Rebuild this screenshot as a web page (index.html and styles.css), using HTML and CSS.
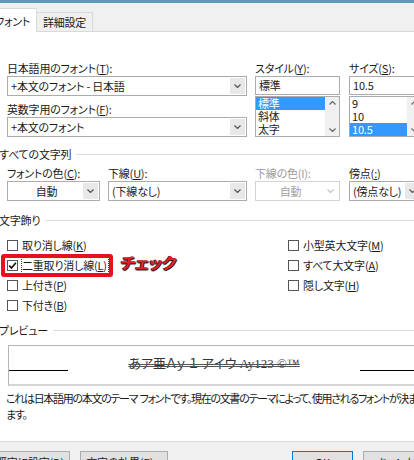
FILE: index.html
```html
<!DOCTYPE html>
<html lang="ja">
<head>
<meta charset="utf-8">
<title>フォント</title>
<link rel="stylesheet" href="styles.css">
</head>
<body>
<div class="dialog">
  <div class="titlebar"></div>
  <div class="tabbar">
    <div class="tab tab-active">フォント</div>
    <div class="tab tab-inactive">詳細設定</div>
  </div>
  <div class="page">
    <div class="font-row">
      <div class="col-main">
        <div class="label">日本語用のフォント(<u>T</u>):</div>
        <div class="combo"><span class="val">+本文のフォント - 日本語</span><span class="arrow"><svg width="7" height="4" viewBox="0 0 7 4"><path d="M0.5 0.5 L3.5 3.5 L6.5 0.5" fill="none" stroke="#555" stroke-width="1.2"/></svg></span></div>
        <div class="label second">英数字用のフォント(<u>F</u>):</div>
        <div class="combo"><span class="val">+本文のフォント</span><span class="arrow"><svg width="7" height="4" viewBox="0 0 7 4"><path d="M0.5 0.5 L3.5 3.5 L6.5 0.5" fill="none" stroke="#555" stroke-width="1.2"/></svg></span></div>
      </div>
      <div class="col-style">
        <div class="label">スタイル(<u>Y</u>):</div>
        <div class="textbox">標準</div>
        <div class="listbox">
          <div class="items">
            <div class="item sel">標準</div>
            <div class="item">斜体</div>
            <div class="item">太字</div>
          </div>
          <div class="scroll">
            <svg width="7" height="4" viewBox="0 0 7 4"><path d="M0.5 3.5 L3.5 0.5 L6.5 3.5" fill="none" stroke="#666" stroke-width="1.2"/></svg>
            <svg width="7" height="4" viewBox="0 0 7 4"><path d="M0.5 0.5 L3.5 3.5 L6.5 0.5" fill="none" stroke="#666" stroke-width="1.2"/></svg>
          </div>
        </div>
      </div>
      <div class="col-size">
        <div class="label">サイズ(<u>S</u>):</div>
        <div class="textbox">10.5</div>
        <div class="listbox">
          <div class="items">
            <div class="item">9</div>
            <div class="item">10</div>
            <div class="item sel">10.5</div>
          </div>
          <div class="scroll">
            <svg width="7" height="4" viewBox="0 0 7 4"><path d="M0.5 3.5 L3.5 0.5 L6.5 3.5" fill="none" stroke="#666" stroke-width="1.2"/></svg>
            <svg width="7" height="4" viewBox="0 0 7 4"><path d="M0.5 0.5 L3.5 3.5 L6.5 0.5" fill="none" stroke="#666" stroke-width="1.2"/></svg>
          </div>
        </div>
      </div>
    </div>

    <div class="group g-all">すべての文字列</div>
    <div class="attr-row">
      <div class="c1">
        <div class="label">フォントの色(<u>C</u>):</div>
        <div class="combo center"><span class="val">自動</span><span class="arrow"><svg width="7" height="4" viewBox="0 0 7 4"><path d="M0.5 0.5 L3.5 3.5 L6.5 0.5" fill="none" stroke="#555" stroke-width="1.2"/></svg></span></div>
      </div>
      <div class="c2">
        <div class="label">下線(<u>U</u>):</div>
        <div class="combo"><span class="val">(下線なし)</span><span class="arrow"><svg width="7" height="4" viewBox="0 0 7 4"><path d="M0.5 0.5 L3.5 3.5 L6.5 0.5" fill="none" stroke="#555" stroke-width="1.2"/></svg></span></div>
      </div>
      <div class="c3">
        <div class="label disabled-label">下線の色(I):</div>
        <div class="combo center disabled"><span class="val">自動</span><span class="arrow"><svg width="7" height="4" viewBox="0 0 7 4"><path d="M0.5 0.5 L3.5 3.5 L6.5 0.5" fill="none" stroke="#c4c4c4" stroke-width="1.2"/></svg></span></div>
      </div>
      <div class="c4">
        <div class="label">傍点(<u>:</u>)</div>
        <div class="combo"><span class="val">(傍点なし)</span><span class="arrow"><svg width="7" height="4" viewBox="0 0 7 4"><path d="M0.5 0.5 L3.5 3.5 L6.5 0.5" fill="none" stroke="#555" stroke-width="1.2"/></svg></span></div>
      </div>
    </div>

    <div class="group g-deco">文字飾り</div>
    <div class="checks">
      <div class="check-col left">
        <div class="check"><span class="box"></span><span>取り消し線(<u>K</u>)</span></div>
        <div class="check"><span class="box"><svg width="9" height="9" viewBox="0 0 9 9"><path d="M1.2 4.6 L3.5 7 L7.9 1.8" fill="none" stroke="#111" stroke-width="1.6"/></svg></span><span class="focus">二重取り消し線(<u>L</u>)</span></div>
        <div class="check"><span class="box"></span><span>上付き(<u>P</u>)</span></div>
        <div class="check"><span class="box"></span><span>下付き(<u>B</u>)</span></div>
      </div>
      <div class="check-col right">
        <div class="check"><span class="box"></span><span>小型英大文字(<u>M</u>)</span></div>
        <div class="check"><span class="box"></span><span>すべて大文字(<u>A</u>)</span></div>
        <div class="check"><span class="box"></span><span>隠し文字(<u>H</u>)</span></div>
      </div>
      <div class="highlight"></div>
      <div class="callout">チェック</div>
    </div>

    <div class="group g-prev">プレビュー</div>
    <div class="preview">
      <span class="base-line bl-left"></span>
      <span class="sample">あア亜Ａｙ １ アイウ Ay123 ©™</span>
      <span class="base-line bl-right"></span>
    </div>
    <div class="desc">これは日本語用の本文のテーマ&nbsp;&nbsp;フォントです。現在の文書のテーマによって、使用されるフォントが決まり<br>ます。</div>
  </div>
  <div class="footer">
    <div class="btn b-default">既定に設定(<u>D</u>)</div>
    <div class="btn b-effect">文字の効果(<u>E</u>)...</div>
    <div class="btn b-ok">OK</div>
    <div class="btn b-cancel">キャンセル</div>
  </div>
</div>
</body>
</html>
```

FILE: styles.css
```css
* { box-sizing: border-box; }
html, body { margin: 0; padding: 0; }
body {
  width: 414px;
  height: 460px;
  overflow: hidden;
  background: #f0f0f0;
  font-family: "Noto Sans CJK JP", "Noto Sans", sans-serif;
  font-size: 11px;
  color: #1a1a1a;
  font-feature-settings: "palt";
  letter-spacing: -0.2px;
}
u { text-decoration-thickness: 1px; text-underline-offset: 1px; }
.dialog { width: 440px; }

.titlebar { height: 3px; background: #5c9ab9; }

.tabbar {
  height: 29px;
  display: flex;
  align-items: flex-end;
  border-bottom: 1px solid #d9d9d9;
  background: #f0f0f0;
}
.tab { white-space: nowrap; }
.tab-active {
  width: 42px;
  margin-left: -5px;
  height: 24px;
  margin-bottom: -1px;
  padding-top: 2px;
  padding-right: 9px;
  line-height: 21px;
  text-align: right;
  background: #fff;
  border: 1px solid #d9d9d9;
  border-bottom: none;
  border-left: none;
}
.tab-inactive {
  width: 56px;
  height: 19px;
  line-height: 18px;
  text-align: center;
  background: #f0f0f0;
  border: 1px solid #d9d9d9;
  border-left: none;
  border-bottom: none;
}

.page {
  background: #fff;
  height: 409px;
  padding-top: 28px;
  position: relative;
}

.label { height: 16px; line-height: 16px; white-space: nowrap; }
.label.second { margin-top: 5px; }
.disabled-label { color: #9a9a9a; }

.font-row { display: flex; padding-left: 7px; }
.col-main { width: 240px; }
.col-style { width: 85px; margin-left: 8px; }
.col-size { width: 73px; margin-left: 9px; }

.combo {
  height: 20px;
  border: 1px solid #acacac;
  background: #fff;
  display: flex;
}
.combo .val {
  flex: 1;
  padding-left: 3px;
  line-height: 18px;
  white-space: nowrap;
  overflow: hidden;
}
.combo.center .val { text-align: center; }
.combo .arrow {
  width: 15px;
  margin: 1px;
  background: #e8e8e8;
  display: flex;
  align-items: center;
  justify-content: center;
}
.combo.disabled { border-color: #d4d4d4; color: #a0a0a0; }
.combo.disabled .arrow { background: #fff; }

.textbox {
  height: 19px;
  border: 1px solid #acacac;
  padding-left: 3px;
  line-height: 17px;
}
.listbox {
  margin-top: 1px;
  height: 41px;
  border: 1px solid #acacac;
  display: flex;
}
.items { flex: 1; }
.item { height: 13px; line-height: 13px; padding-left: 2px; }
.item.sel { background: #3399ff; color: #fff; }
.scroll {
  width: 14px;
  background: #f0f0f0;
  display: flex;
  flex-direction: column;
  justify-content: space-between;
  align-items: center;
  padding: 4px 0 4px;
}

.group {
  display: flex;
  align-items: center;
  height: 16px;
  line-height: 16px;
  margin-left: -1px;
  white-space: nowrap;
}
.group::after {
  content: "";
  flex: 1;
  height: 1px;
  background: #dcdcdc;
  margin-left: 5px;
}
.g-all { margin-top: 9px; }
.g-deco { margin-top: 11px; }
.g-prev { margin-top: 7px; }

.attr-row { display: flex; padding-left: 7px; margin-top: 3px; }
.c1 { width: 93px; }
.c2 { width: 139px; margin-left: 8px; }
.c3 { width: 85px; margin-left: 8px; }
.c4 { width: 73px; margin-left: 9px; }

.checks { display: flex; margin-top: 7px; position: relative; }
.check-col.left { width: 288px; padding-left: 7px; }
.check { height: 20px; display: flex; align-items: center; white-space: nowrap; }
.box {
  width: 11px;
  height: 11px;
  border: 1px solid #555;
  background: #fff;
  margin-right: 4px;
  display: flex;
  align-items: center;
  justify-content: center;
}
.focus { outline: 1px dotted #333; outline-offset: 0; padding: 0 1px 0 0; line-height: 15px; }

.highlight {
  position: absolute;
  left: 1px;
  top: 19px;
  width: 112px;
  height: 23px;
  border: 4px solid #e8101a;
  border-radius: 3px;
}
.callout {
  position: absolute;
  left: 121px;
  top: 16px;
  font-size: 16px;
  line-height: 22px;
  font-weight: bold;
  color: #e3202a;
  letter-spacing: -0.5px;
  transform: skewX(-8deg);
  text-shadow: 1px 1px 0 #3a1a1a, -1px 0 0 #5a2020, 0 1px 1px #000;
}

.preview {
  margin: 7px 0 0 8px;
  width: 408px;
  height: 41px;
  border: 1px solid #b4b4b4;
  border-bottom: 2px solid #d6d6d6;
  border-right: none;
  display: flex;
  align-items: flex-start;
}
.base-line { height: 1px; background: #000; margin-top: 24px; }
.bl-left { width: 59px; }
.bl-right { width: 56px; }
.sample {
  flex: 1;
  text-align: center;
  margin-top: 8px;
  line-height: 20px;
  font-family: "Liberation Serif", "Noto Sans CJK JP", serif;
  font-size: 13px;
  letter-spacing: 0;
  color: #333;
  white-space: nowrap;
  text-decoration: line-through double #555;
  text-decoration-thickness: 1px;
}

.desc {
  margin-top: 4px;
  padding-left: 6px;
  line-height: 16px;
  white-space: nowrap;
  letter-spacing: -1.3px;
}

.footer {
  border-top: 1px solid #dadada;
  padding-top: 9px;
  display: flex;
  height: 30px;
}
.btn {
  height: 23px;
  line-height: 21px;
  background: #e1e1e1;
  border: 1px solid #adadad;
  text-align: center;
  white-space: nowrap;
}
.b-default { width: 80px; margin-left: -10px; }
.b-effect { width: 88px; margin-left: 10px; }
.b-ok { width: 61px; margin-left: 124px; border-color: #0078d7; }
.b-cancel { width: 77px; margin-left: 10px; }
```
